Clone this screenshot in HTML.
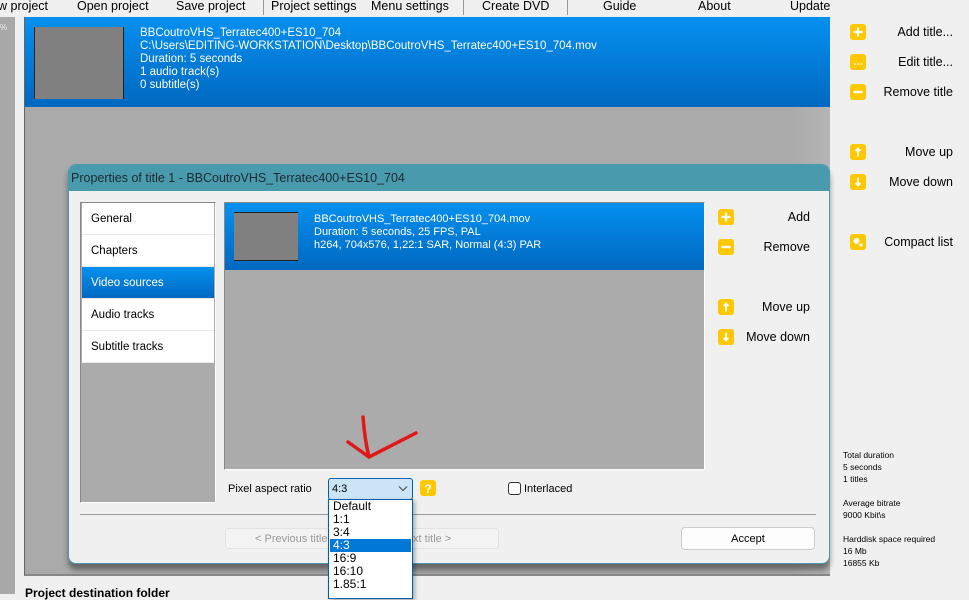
<!DOCTYPE html>
<html><head><meta charset="utf-8"><style>
*{margin:0;padding:0;box-sizing:border-box}
body{width:969px;height:594px;overflow:hidden;background:#f0f0f0;font-family:"Liberation Sans",sans-serif;position:relative;color:#000}
.a{position:absolute;white-space:nowrap}
.menu{font-size:12.5px;top:-1px}
.blue{background:linear-gradient(#0590f0,#0068c0);color:#fff}
.ic{position:absolute;width:16px;height:16px}
.rt{font-size:12.5px;text-align:right}
.sb{position:absolute;left:82px;width:132px;height:32px;font-size:11.5px;padding:10px 0 0 9px;border-bottom:1px solid #e8e8e8;background:#fff}
.dd{position:absolute;left:330px;width:81px;height:13px;font-size:12px;line-height:13px;padding-left:3px}
</style></head><body>
<svg width="0" height="0" style="position:absolute">
<defs>
<g id="plus"><rect width="16" height="16" rx="3" fill="#ffc800"/><path d="M8 3.5V12.5M3.5 8H12.5" stroke="#fff" stroke-width="2.2"/></g>
<g id="minus"><rect width="16" height="16" rx="3" fill="#ffc800"/><path d="M3.5 8H12.5" stroke="#fff" stroke-width="2.4"/></g>
<g id="dots"><rect width="16" height="16" rx="3" fill="#ffc800"/><path d="M4 10h1.5M7.3 10h1.5M10.6 10h1.5" stroke="#fff" stroke-width="1.5"/></g>
<g id="up"><rect width="16" height="16" rx="3" fill="#ffc800"/><path d="M8 12.5V4.5M5.5 7L8 4.5L10.5 7" stroke="#fff" stroke-width="1.8" fill="none"/></g>
<g id="down"><rect width="16" height="16" rx="3" fill="#ffc800"/><path d="M8 3.5V11.5M5.5 9L8 11.5L10.5 9" stroke="#fff" stroke-width="1.8" fill="none"/></g>
<g id="cmp"><rect width="16" height="16" rx="3" fill="#ffc800"/><circle cx="6.5" cy="7" r="3" fill="#fff"/><circle cx="11" cy="11" r="1.6" fill="#fff"/></g>
</defs></svg>
<!-- menubar -->
<div class="a menu" style="left:-2px">w project</div>
<div class="a menu" style="left:77px">Open project</div>
<div class="a menu" style="left:176px">Save project</div>
<div class="a" style="left:263px;top:0;width:1px;height:15px;background:#999"></div>
<div class="a menu" style="left:271px">Project settings</div>
<div class="a menu" style="left:371px">Menu settings</div>
<div class="a" style="left:463px;top:0;width:1px;height:15px;background:#999"></div>
<div class="a menu" style="left:482px">Create DVD</div>
<div class="a" style="left:567px;top:0;width:1px;height:15px;background:#999"></div>
<div class="a menu" style="left:603px">Guide</div>
<div class="a menu" style="left:698px">About</div>
<div class="a menu" style="left:790px">Update</div>
<!-- left strip -->
<div class="a" style="left:0;top:17px;width:15px;height:577px;background:#a8a8a8"></div>
<div class="a" style="left:0;top:23px;font-size:8px;color:#eee">%</div>
<!-- main list -->
<div class="a" style="left:24px;top:17px;width:806px;height:559px;background:linear-gradient(90deg,#aaa,#aaa 95%,#b5b5b5);border-left:1px solid #666;border-bottom:2px solid #888"></div>
<div class="a blue" style="left:25px;top:17px;width:805px;height:90px"></div>
<div class="a" style="left:34px;top:27px;width:90px;height:72px;background:#808080;border-left:1px solid #222;border-right:1px solid #222"></div>
<div class="a" style="left:140px;top:27px;font-size:11.5px;line-height:13px;color:#fff">BBCoutroVHS_Terratec400+ES10_704<br>C:\Users\EDITING-WORKSTATION\Desktop\BBCoutroVHS_Terratec400+ES10_704.mov<br>Duration: 5 seconds<br>1 audio track(s)<br>0 subtitle(s)</div>
<div class="a" style="left:25px;top:586px;font-size:12px;font-weight:bold">Project destination folder</div>
<!-- right panel -->
<svg class="ic" style="left:850px;top:24px"><use href="#plus"/></svg><div class="a rt" style="right:16px;top:25px">Add title...</div>
<svg class="ic" style="left:850px;top:54px"><use href="#dots"/></svg><div class="a rt" style="right:16px;top:55px">Edit title...</div>
<svg class="ic" style="left:850px;top:84px"><use href="#minus"/></svg><div class="a rt" style="right:16px;top:85px">Remove title</div>
<svg class="ic" style="left:850px;top:144px"><use href="#up"/></svg><div class="a rt" style="right:16px;top:145px">Move up</div>
<svg class="ic" style="left:850px;top:174px"><use href="#down"/></svg><div class="a rt" style="right:16px;top:175px">Move down</div>
<svg class="ic" style="left:850px;top:234px"><use href="#cmp"/></svg><div class="a rt" style="right:16px;top:235px">Compact list</div>
<div class="a" style="left:843px;top:449px;font-size:8.5px;line-height:12px">Total duration<br>5 seconds<br>1 titles<br><br>Average bitrate<br>9000 Kbit\s<br><br>Harddisk space required<br>16 Mb<br>16855 Kb</div>
<!-- dialog -->
<div class="a" style="left:68px;top:164px;width:762px;height:400px;background:#f0f0f0;border:1px solid #4a9aad;border-radius:8px;box-shadow:0 6px 6px rgba(0,0,0,.4);overflow:hidden">
<div style="height:26px;background:#4a9aad;font-size:12.5px;padding:6px 0 0 2px;color:#1a2a30">Properties of title 1 - BBCoutroVHS_Terratec400+ES10_704</div>
</div>
<div class="a" style="left:80px;top:202px;width:136px;height:301px;background:#ababab;border:1px solid #888;border-right-color:#fff;border-bottom-color:#fff"></div>
<div class="sb" style="top:203px">General</div>
<div class="sb" style="top:235px">Chapters</div>
<div class="sb" style="top:267px;background:linear-gradient(#0590f0,#0068c0);color:#fff">Video sources</div>
<div class="sb" style="top:299px">Audio tracks</div>
<div class="sb" style="top:331px">Subtitle tracks</div>
<div class="a" style="left:224px;top:202px;width:481px;height:268px;background:#ababab;border:1px solid #888;border-right-color:#fff;border-bottom-color:#fff"></div>
<div class="a blue" style="left:225px;top:203px;width:479px;height:67px"></div>
<div class="a" style="left:234px;top:212px;width:64px;height:49px;background:#808080;border-top:1px solid #222;border-bottom:1px solid #222"></div>
<div class="a" style="left:314px;top:213px;font-size:11px;line-height:13px;color:#fff">BBCoutroVHS_Terratec400+ES10_704.mov<br>Duration: 5 seconds, 25 FPS, PAL<br>h264, 704x576, 1,22:1 SAR, Normal (4:3) PAR</div>
<svg class="ic" style="left:718px;top:209px"><use href="#plus"/></svg><div class="a rt" style="right:159px;top:210px">Add</div>
<svg class="ic" style="left:718px;top:239px"><use href="#minus"/></svg><div class="a rt" style="right:159px;top:240px">Remove</div>
<svg class="ic" style="left:718px;top:299px"><use href="#up"/></svg><div class="a rt" style="right:159px;top:300px">Move up</div>
<svg class="ic" style="left:718px;top:329px"><use href="#down"/></svg><div class="a rt" style="right:159px;top:330px">Move down</div>
<!-- red arrow -->
<svg class="a" style="left:0;top:0" width="969" height="594"><g fill="none" stroke="#e01818" stroke-width="3.5" stroke-linecap="round" stroke-linejoin="round"><path d="M363 417 C364 430 366 445 369 457"/><path d="M348 442 L369 457 L416 433"/></g></svg>
<div class="a" style="left:228px;top:483px;font-size:11px">Pixel aspect ratio</div>
<div class="a" style="left:328px;top:478px;width:85px;height:22px;background:#cce4f7;border:1px solid #0060b0;border-radius:3px;font-size:11px;padding:4px 0 0 3px">4:3<svg style="position:absolute;right:4px;top:6px" width="10" height="7"><path d="M1 1.5L5 5.5L9 1.5" stroke="#444" fill="none"/></svg></div>
<svg class="ic" style="left:420px;top:480px"><rect width="16" height="16" rx="3" fill="#ffc800"/><text x="8" y="13" font-size="12" font-weight="bold" fill="#fff" text-anchor="middle" font-family="Liberation Sans">?</text></svg>
<div class="a" style="left:508px;top:482px;width:13px;height:13px;border:1px solid #333;border-radius:3px;background:#fff"></div>
<div class="a" style="left:524px;top:483px;font-size:11px">Interlaced</div>
<div class="a" style="left:80px;top:514px;width:736px;height:1px;background:#999"></div>
<div class="a" style="left:225px;top:528px;width:274px;height:21px;border:1px solid #e2e2e2;border-radius:3px;background:#f3f3f3;font-size:11px;color:#999;padding-top:4px"><span style="position:absolute;left:29px">&lt; Previous title</span><span style="position:absolute;left:173px">Next title &gt;</span></div>
<div class="a" style="left:681px;top:527px;width:134px;height:23px;border:1px solid #ccc;border-radius:4px;background:#fdfdfd;font-size:11px;text-align:center;padding-top:5px">Accept</div>
<!-- dropdown -->
<div class="a" style="left:328px;top:499px;width:85px;height:100px;background:#fff;border:1px solid #0060b0;box-shadow:2px 2px 4px rgba(0,0,0,.3)"></div>
<div class="dd" style="top:500px">Default</div>
<div class="dd" style="top:513px">1:1</div>
<div class="dd" style="top:526px">3:4</div>
<div class="dd" style="top:539px;background:#0078d7;color:#fff">4:3</div>
<div class="dd" style="top:552px">16:9</div>
<div class="dd" style="top:565px">16:10</div>
<div class="dd" style="top:578px">1.85:1</div>
</body></html>
